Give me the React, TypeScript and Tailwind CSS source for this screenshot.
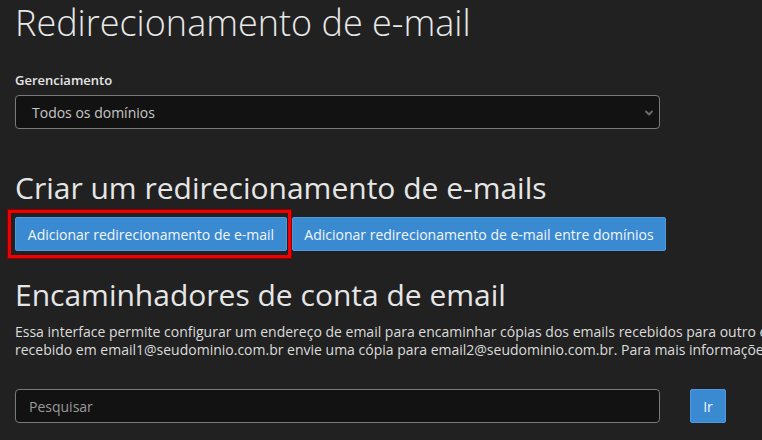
import { ChevronDown } from "lucide-react";

const font = { fontFamily: '"Open Sans", "Noto Sans", sans-serif' };

export default function App() {
  return (
    <div
      className="h-[440px] w-[762px] overflow-hidden bg-[#212121] pl-[15px] text-[#e6e6e6]"
      style={font}
    >
      <h1 className="mt-[2px] whitespace-nowrap text-[36px] font-light leading-[42px] text-[#e8e8e8]">
        Redirecionamento de e-mail
      </h1>

      {/* Gerenciamento */}
      <div className="mt-[26px]">
        <label className="block text-[13px] font-semibold leading-[20px] text-[#e6e6e6]">
          Gerenciamento
        </label>
        <div className="relative mt-[5px] flex h-[34px] w-[645px] items-center rounded-[4px] border border-[#7a7a7a] bg-[#121212] pl-4 text-[14px] text-[#c8c8c8]">
          Todos os domínios
          <ChevronDown className="absolute right-[4px] top-[11px] h-3 w-3 text-[#6a6a6a]" strokeWidth={4} />
        </div>
      </div>

      {/* Criar */}
      <h2 className="mt-[42px] whitespace-nowrap text-[30px] leading-[34px] text-[#e6e6e6]">
        Criar um redirecionamento de e-mails
      </h2>
      <div className="mt-[12px] flex gap-[5px]">
        <div className="relative">
          <button className="h-[34px] w-[272px] rounded-[2px] border border-[#4f9ae0] bg-[#3a8ad1] text-[14px] text-[#f2f6fb]">
            Adicionar redirecionamento de e-mail
          </button>
          <div className="pointer-events-none absolute -left-[7px] -top-[7px] h-[48px] w-[283px] border-[3px] border-[#f00000] shadow-[0_0_0_1px_#8a0000]" />
        </div>
        <button className="h-[34px] w-[374px] rounded-[2px] border border-[#4f9ae0] bg-[#3a8ad1] text-[14px] text-[#f2f6fb]">
          Adicionar redirecionamento de e-mail entre domínios
        </button>
      </div>

      {/* Encaminhadores */}
      <h2 className="mt-[27px] whitespace-nowrap text-[30px] leading-[34px] text-[#e6e6e6]">
        Encaminhadores de conta de email
      </h2>
      <p className="mt-[11px] whitespace-nowrap text-[14px] leading-[18px] text-[#dcdcdc]">
        Essa interface permite configurar um endereço de email para encaminhar cópias dos emails recebidos para outro endereço, fazendo com que todo email
        <br />
        recebido em email1@seudominio.com.br envie uma cópia para email2@seudominio.com.br. Para mais informações, consulte a documentação.
      </p>

      <div className="mt-[30px] flex items-center">
        <input
          placeholder="Pesquisar"
          className="h-[34px] w-[645px] rounded-[4px] border border-[#7a7a7a] bg-[#121212] px-[13px] text-[14px] text-[#c8c8c8] placeholder:text-[#9a9a9a] outline-none"
        />
        <button className="ml-[30px] h-[34px] w-[36px] rounded-[2px] border border-[#4f9ae0] bg-[#3a8ad1] text-[14px] text-[#f2f6fb]">
          Ir
        </button>
      </div>
    </div>
  );
}
